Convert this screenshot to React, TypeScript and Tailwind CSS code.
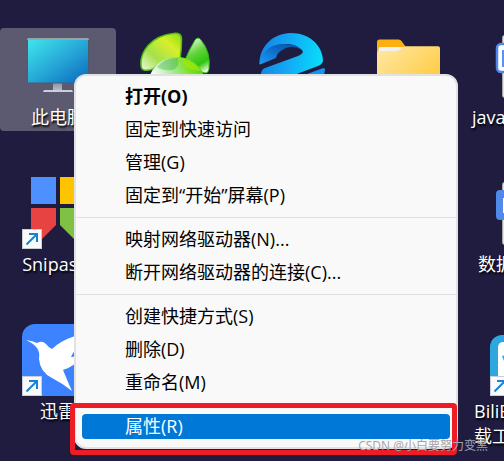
import type { ReactNode } from 'react';

interface DesktopItem {
  key: string;
  label: string;
  icon: ReactNode;
  shortcut?: boolean;
  selected?: boolean;
  place: string;
  align?: string;
}

interface MenuEntry {
  label: string;
  bold?: boolean;
}

const MENU_GROUPS: MenuEntry[][] = [
  [
    { label: '打开(O)', bold: true },
    { label: '固定到快速访问' },
    { label: '管理(G)' },
    { label: '固定到“开始”屏幕(P)' },
  ],
  [{ label: '映射网络驱动器(N)...' }, { label: '断开网络驱动器的连接(C)...' }],
  [{ label: '创建快捷方式(S)' }, { label: '删除(D)' }, { label: '重命名(M)' }],
];

function ComputerIcon() {
  return (
    <svg viewBox="0 0 72 72" className="size-full" aria-hidden="true">
      <defs>
        <linearGradient id="screen" x1="0" y1="0" x2="1" y2="1">
          <stop offset="0" stopColor="#3fe6ea" />
          <stop offset="0.5" stopColor="#27a9d8" />
          <stop offset="1" stopColor="#0a68bd" />
        </linearGradient>
        <linearGradient id="stand" x1="0" y1="0" x2="0" y2="1">
          <stop offset="0" stopColor="#8b959f" />
          <stop offset="1" stopColor="#b9c2ca" />
        </linearGradient>
      </defs>
      <rect x="31" y="53" width="9" height="8" fill="url(#stand)" />
      <path d="M22 60h28l1 2H21z" fill="#c9d0d6" />
      <rect x="5" y="8" width="62" height="45.500" rx="1.500" fill="#4b5c6b" />
      <path d="M5 10V9.500q0-1.500 1.500-1.500h59q1.500 0 1.500 1.500V10z" fill="#9aa2aa" />
      <rect x="6" y="10" width="60" height="42.500" fill="url(#screen)" />
    </svg>
  );
}

function LeavesIcon() {
  return (
    <svg viewBox="0 0 72 72" className="size-full" aria-hidden="true">
      <defs>
        <linearGradient id="leafLeft" x1="0" y1="1" x2="1" y2="0">
          <stop offset="0" stopColor="#ecfbe0" />
          <stop offset="0.35" stopColor="#a5e04c" />
          <stop offset="0.7" stopColor="#d7ef2b" />
          <stop offset="1" stopColor="#8bdc10" />
        </linearGradient>
        <linearGradient id="leafRight" x1="0.3" y1="0" x2="0.7" y2="1">
          <stop offset="0" stopColor="#e6fbe2" />
          <stop offset="0.4" stopColor="#64d43c" />
          <stop offset="0.75" stopColor="#2fc40f" />
          <stop offset="1" stopColor="#dcf9d2" />
        </linearGradient>
        <linearGradient id="leafFront" x1="0" y1="0.3" x2="1" y2="0">
          <stop offset="0" stopColor="#f2fff0" />
          <stop offset="0.4" stopColor="#9be88a" />
          <stop offset="0.65" stopColor="#7fe01c" />
          <stop offset="1" stopColor="#3ccc14" />
        </linearGradient>
      </defs>
      <path
        d="M2 35C1 22 12 6 34 3.500Q43 2 42.500 10Q42.500 20 41 29Q24 28 14 39Q2 43 2 35z"
        fill="url(#leafLeft)"
        stroke="#4fc010"
        strokeWidth="1.500"
      />
      <path
        d="M46 30Q50 20 56 10Q59 6 62 10Q72 22 70 39Q69 45 63 42Q56 32 46 30z"
        fill="url(#leafRight)"
        stroke="#2fb50c"
        strokeWidth="1"
      />
      <path d="M11 45Q19 27 38 27Q56 27 65 45V60H11z" fill="url(#leafFront)" />
      <path d="M18 37Q25 28 39 28Q41 38 33 40Q24 41 18 37z" fill="#3da43c" opacity="0.35" />
      <path d="M44 29Q56 31 62 41Q48 40 44 33z" fill="#a4e80c" opacity="0.7" />
    </svg>
  );
}

function BrowserIcon() {
  return (
    <svg viewBox="0 0 72 72" className="size-full" aria-hidden="true">
      <defs>
        <linearGradient id="wave" x1="0" y1="0.2" x2="1" y2="0.3">
          <stop offset="0" stopColor="#1583e2" />
          <stop offset="0.45" stopColor="#13a5f4" />
          <stop offset="1" stopColor="#08dcfa" />
        </linearGradient>
        <linearGradient id="waveShade" x1="0" y1="1" x2="1" y2="0">
          <stop offset="0" stopColor="#1f9cfa" />
          <stop offset="0.6" stopColor="#0a66c2" />
          <stop offset="1" stopColor="#0654a0" />
        </linearGradient>
      </defs>
      <path
        d="M3.500 34C3 17 17 3 35 3C52 3 66 14 67 30Q67 34 62 36L30 48H5V43Q6 39 9 38L42 26Q49 23 46 20Q39 13 28 14Q15 16 7 32z"
        fill="url(#wave)"
      />
      <path d="M3.500 34C5 22 16 13 28 14Q40 14 46 20Q37 15 29 18.500Q21 22 20 28L4 34.500z" fill="url(#waveShade)" />
      <path d="M51 44L66 38.500Q69 37 69 40Q68 50 60 58H51z" fill="#1595f0" />
    </svg>
  );
}

function FolderIcon() {
  return (
    <svg viewBox="0 0 72 72" className="size-full" aria-hidden="true">
      <defs>
        <linearGradient id="folderFront" x1="0" y1="0" x2="1" y2="0.8">
          <stop offset="0" stopColor="#ffe9a8" />
          <stop offset="1" stopColor="#ffc93a" />
        </linearGradient>
      </defs>
      <path d="M4 12q0-2.500 2.500-2.500h19q2 0 3 1.500l4 5.500L30 26H4z" fill="#fbb012" />
      <path d="M5.500 19q0-2 2-2H31v8H5.500z" fill="#f1f1f1" />
      <path
        d="M4 62V23q0-2 2-2h16q3 0 5-1.500l3.500-2.500q1-.700 2.500-.700h32q2 0 2 2V62z"
        fill="url(#folderFront)"
      />
    </svg>
  );
}

function CodeIcon() {
  return (
    <svg viewBox="0 0 72 72" className="size-full" aria-hidden="true">
      <rect x="12.500" y="5.500" width="52" height="62" rx="2" fill="#e4e2e2" stroke="#a9a9a9" />
      <rect x="7" y="14" width="40" height="28" rx="4" fill="#fff" stroke="#4f86e8" strokeWidth="2.500" />
      <rect x="12" y="20" width="26" height="17" fill="#5b91ee" />
      <rect x="14" y="22" width="22" height="13" fill="#dbe7fd" />
    </svg>
  );
}

function DataIcon() {
  return (
    <svg viewBox="0 0 72 72" className="size-full" aria-hidden="true">
      <rect x="12.500" y="5.500" width="52" height="62" rx="2" fill="#e4e2e2" stroke="#a9a9a9" />
      <rect x="6" y="13" width="42" height="30" rx="4" fill="#5189e8" />
      <rect x="13" y="21" width="20" height="15" fill="#fff" />
    </svg>
  );
}

function SnipIcon() {
  return (
    <svg viewBox="0 0 72 72" className="size-full" aria-hidden="true">
      <path d="M9 0h25v27H9z" fill="#4f90ff" />
      <path d="M38 0h25v27H38z" fill="#ffc400" />
      <path d="M9 31h25v17L20 62H9z" fill="#e84343" />
      <path d="M38 31h25v31H52L38 48z" fill="#7fc142" />
    </svg>
  );
}

function BirdIcon() {
  return (
    <svg viewBox="0 0 72 72" className="size-full" aria-hidden="true">
      <rect width="72" height="72" rx="13" fill="#3d82fe" />
      <path
        d="M4 16Q11 17 15 19Q20 16 24 20Q27 24 30 25Q38 17 53 12L68 8Q66 20 56 25Q52 26 49 33L60 32Q52 43 41 46Q45 56 50 67Q40 59 30 54Q18 48 17 35Q18 28 15 24Q11 19 4 16z"
        fill="#fff"
      />
    </svg>
  );
}

function VideoIcon() {
  return (
    <svg viewBox="0 0 72 72" className="size-full" aria-hidden="true">
      <rect y="11" width="72" height="61" rx="12" fill="#2ea7e0" />
      <rect x="8" y="18" width="56" height="46" rx="5" fill="#fff" />
      <path d="M12 32l10-3v5l-8 3z" fill="#2ea7e0" />
    </svg>
  );
}

function ShortcutBadge() {
  return (
    <span className="absolute bottom-0 left-0 flex size-5 items-center justify-center border border-[#c9ced8] bg-[#fafafa]">
      <svg viewBox="0 0 14 14" className="size-3.5" fill="none" stroke="#1683d8" strokeWidth="2" aria-hidden="true">
        <path d="M1.500 12.500L12 2M4 2h8v8" />
      </svg>
    </span>
  );
}

const DESKTOP: DesktopItem[] = [
  { key: 'computer', label: '此电脑', icon: <ComputerIcon />, selected: true, place: 'col-start-1 row-start-1' },
  { key: 'leaves', label: '', icon: <LeavesIcon />, place: 'col-start-2 row-start-1' },
  { key: 'browser', label: '', icon: <BrowserIcon />, place: 'col-start-3 row-start-1' },
  { key: 'folder', label: '', icon: <FolderIcon />, place: 'col-start-4 row-start-1' },
  { key: 'java', label: 'java', icon: <CodeIcon />, place: 'col-start-5 row-start-1', align: 'pl-1 text-left' },
  { key: 'snipaste', label: 'Snipaste', icon: <SnipIcon />, shortcut: true, place: 'col-start-1 row-start-2' },
  { key: 'data', label: '数据', icon: <DataIcon />, place: 'col-start-5 row-start-2', align: 'pl-2.5 text-left' },
  { key: 'thunder', label: '迅雷', icon: <BirdIcon />, shortcut: true, place: 'col-start-1 row-start-3' },
  {
    key: 'bili',
    label: 'BiliB\n载工',
    icon: <VideoIcon />,
    shortcut: true,
    place: 'col-start-5 row-start-3',
    align: 'pl-1.5 text-left',
  },
];

function DesktopIcon({ item }: { item: DesktopItem }) {
  return (
    <button
      type="button"
      aria-label={item.label || item.key}
      className={`flex h-[103px] flex-col items-center rounded-sm pt-0.5 ${item.place} ${
        item.selected ? 'bg-[#5b5a70]' : ''
      }`}
    >
      <span className="relative block size-[72px] shrink-0">
        {item.icon}
        {item.shortcut && <ShortcutBadge />}
      </span>
      <span
        className={`w-full pt-[3px] text-[18px] leading-[25px] whitespace-pre text-white [text-shadow:1px_2px_2px_#000] ${
          item.align ?? 'text-center'
        }`}
      >
        {item.label}
      </span>
    </button>
  );
}

function ContextMenu() {
  return (
    <div
      role="menu"
      className="absolute top-[74px] left-[74px] w-[384px] rounded-xl border-2 border-[#e2e2e4] bg-[#f9f9f9] py-1 text-[18px] leading-[25px] text-black"
    >
      {MENU_GROUPS.map((group) => (
        <div key={group[0].label}>
          {group.map(({ label, bold }) => (
            <button
              key={label}
              type="button"
              role="menuitem"
              className={`block h-[33px] w-full pl-[49px] text-left ${bold ? 'font-bold' : ''}`}
            >
              {label}
            </button>
          ))}
          <hr className="my-[5px] border-t border-[#e2e2e2]" />
        </div>
      ))}
      <div className="relative px-1.5 py-1">
        <button
          type="button"
          role="menuitem"
          className="block h-[25px] w-full rounded bg-[#0078d7] pl-[43px] text-left text-white"
        >
          属性(R)
        </button>
        <div className="pointer-events-none absolute -top-[7px] -right-px -bottom-3 -left-1.5 rounded-sm border-5 border-[#ee1c24]" />
      </div>
    </div>
  );
}

export default function App() {
  return (
    <main className="relative h-screen overflow-hidden bg-[#1f1c40] font-['Open_Sans','Noto_Sans_CJK_SC',sans-serif]">
      <div className="grid grid-cols-[repeat(5,116px)] gap-x-px gap-y-11 pt-7">
        {DESKTOP.map((item) => (
          <DesktopIcon key={item.key} item={item} />
        ))}
      </div>
      <ContextMenu />
      <p className="absolute right-4 bottom-1.5 text-[12px] leading-[18px] text-[#a3a3aa]">
        CSDN @小白要努力变黑
      </p>
    </main>
  );
}
